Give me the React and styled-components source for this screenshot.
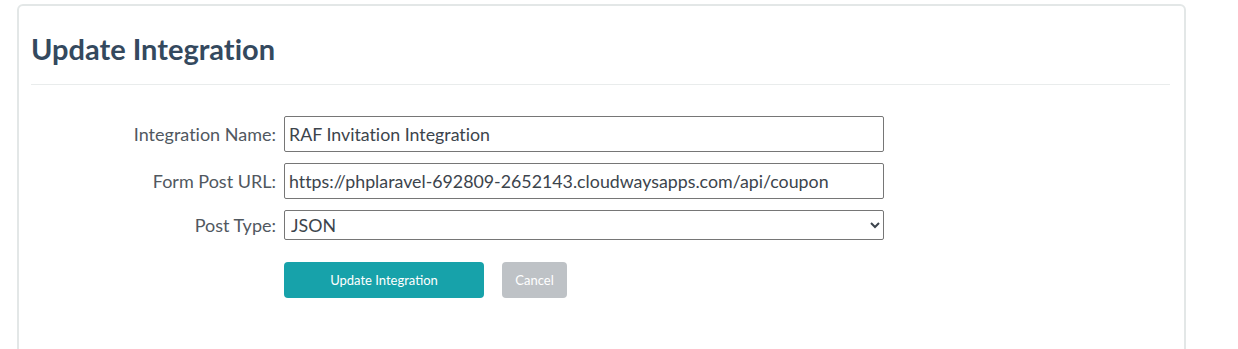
import React, { useState } from "react";
import styled, { createGlobalStyle } from "styled-components";

const GlobalStyle = createGlobalStyle`
  body {
    margin: 0;
    background: #ffffff;
    font-family: Lato, "Liberation Sans", sans-serif;
    font-variant-ligatures: none;
  }
`;

const Page = styled.div`
  padding: 4px 0 0 17px;
  height: 345px;
  overflow: hidden;
`;

const Card = styled.div`
  width: 1169px;
  min-height: 400px;
  border: 2px solid #e3e7e7;
  border-radius: 6px;
  padding: 0 14px 0 12px;
  box-sizing: border-box;
`;

const Header = styled.div`
  padding-top: 26px;
  height: 79px;
  box-sizing: border-box;
  border-bottom: 1px solid #e9ecec;
`;

const Title = styled.h2`
  margin: 0;
  font-size: 29px;
  font-weight: 700;
  color: #34495e;
  line-height: 34px;
`;

const Form = styled.form`
  display: grid;
  grid-template-columns: 245px 600px;
  column-gap: 8px;
  row-gap: 11px;
  padding-top: 31px;
  align-items: center;
`;

const Label = styled.label`
  text-align: right;
  font-size: 18px;
  color: #51585f;
`;

const fieldBase = `
  box-sizing: border-box;
  width: 600px;
  border: 1px solid #767676;
  border-radius: 2px;
  font-family: Lato, "Liberation Sans", sans-serif;
  font-size: 17.8px;
  font-variant-ligatures: none;
  color: #3c444c;
  background: #fff;
  outline: none;
`;

const TextInput = styled.input`
  ${fieldBase}
  height: 36px;
  padding: 0 4px;
`;

const Select = styled.select`
  ${fieldBase}
  height: 30px;
  padding: 0 2px;
`;

const Actions = styled.div`
  grid-column: 2;
  display: flex;
  gap: 18px;
  margin-top: 11px;
`;

const Button = styled.button`
  height: 36px;
  width: ${(p) => p.$width}px;
  border: none;
  border-radius: 4px;
  background: ${(p) => (p.$primary ? "#17a2aa" : "#bec2c6")};
  color: #ffffff;
  font-family: Lato, "Liberation Sans", sans-serif;
  font-size: 13px;
  cursor: pointer;
`;

export default function App() {
  const [name, setName] = useState("RAF Invitation Integration");
  const [url, setUrl] = useState(
    "https://phplaravel-692809-2652143.cloudwaysapps.com/api/coupon"
  );
  const [type, setType] = useState("JSON");

  return (
    <>
      <GlobalStyle />
      <Page>
        <Card>
          <Header>
            <Title>Update Integration</Title>
          </Header>
          <Form onSubmit={(e) => e.preventDefault()}>
            <Label htmlFor="name">Integration Name:</Label>
            <TextInput
              id="name"
              value={name}
              onChange={(e) => setName(e.target.value)}
            />
            <Label htmlFor="url">Form Post URL:</Label>
            <TextInput
              id="url"
              value={url}
              onChange={(e) => setUrl(e.target.value)}
            />
            <Label htmlFor="type">Post Type:</Label>
            <Select
              id="type"
              value={type}
              onChange={(e) => setType(e.target.value)}
            >
              <option>JSON</option>
              <option>Form Data</option>
            </Select>
            <Actions>
              <Button type="submit" $primary $width={200}>
                Update Integration
              </Button>
              <Button type="button" $width={65}>
                Cancel
              </Button>
            </Actions>
          </Form>
        </Card>
      </Page>
    </>
  );
}
